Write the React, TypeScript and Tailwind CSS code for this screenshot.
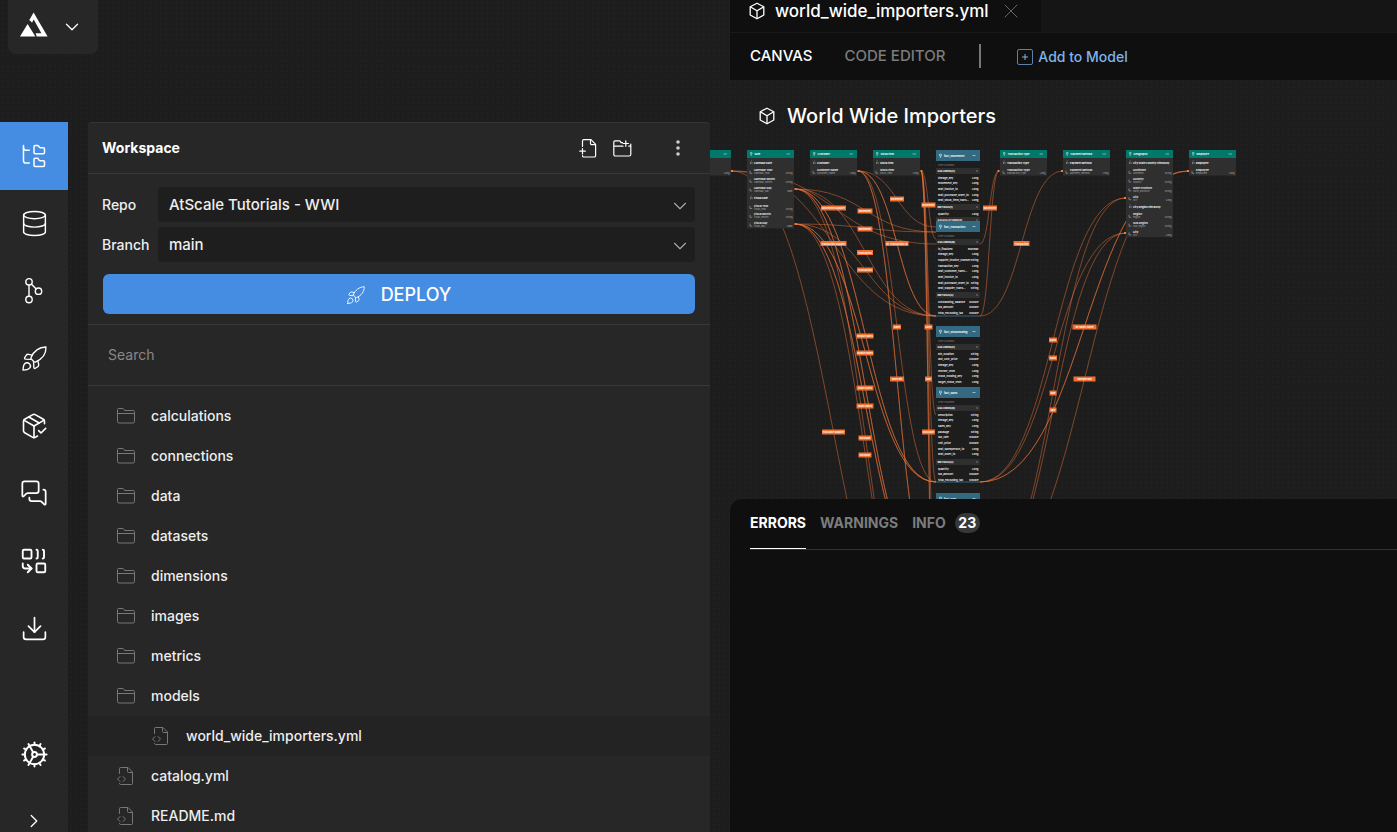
import { useState } from 'react'
import type { ReactNode } from 'react'
import {
  ChevronDown,
  ChevronRight,
  Cog,
  Combine,
  Database,
  Download,
  FolderTree,
  MessagesSquare,
  PackageCheck,
  X,
} from 'lucide-react'

type Row = [name: string, type: string]
type Item = Row | string

/* ---------- icons ---------- */

function Logo() {
  return (
    <svg width="28" height="25" viewBox="0 0 28 25" fill="#fff" aria-hidden="true">
      <path d="M0 24.5 7.6 12 15.4 24.5Z" />
      <path d="M13.6.6 27.6 24.5H16.8L15.6 21.2H21.4L13.7 7.6 12 10.8 10.6 8.9 9.2 8.2Z" />
    </svg>
  )
}

function RocketIcon({ size = 24, stroke = 1.3 }: { size?: number; stroke?: number }) {
  return (
    <svg width={size} height={size} viewBox="0 0 24 24" fill="none" stroke="currentColor" strokeWidth={stroke} strokeLinecap="round" strokeLinejoin="round" aria-hidden="true">
      <path d="M8.6 11.2C11.2 5.2 16.4 1.2 23 1c.2 6.400-3.900 11.800-10.200 14.400a1.200 1.200 0 0 1-1.300-.3L8.900 12.500a1.200 1.200 0 0 1-.3-1.300Z" />
      <path d="M9.800 8.800 6.300 8a2.200 2.200 0 0 0-2.100.7L2.600 11.200c-.4.6 0 1.300.7 1.400l5.200.3" />
      <path d="m15.200 14.200.8 3.500a2.200 2.200 0 0 1-.7 2.100l-2.500 1.600c-.6.4-1.300 0-1.400-.7l-.3-5.200" />
      <path d="M1 23.200c.1-2.600.3-4.900 1.600-6.200a2.900 2.900 0 0 1 4.500 4.500C5.800 22.800 3.500 23.100 1 23.200Z" />
    </svg>
  )
}

function GitIcon() {
  return (
    <svg width="24" height="28" viewBox="0 0 24 28" fill="none" stroke="currentColor" strokeWidth="1.4" aria-hidden="true">
      <circle cx="7" cy="4.800" r="3.200" />
      <circle cx="7" cy="22.500" r="3.200" />
      <circle cx="16.500" cy="14.200" r="3.200" />
      <path d="M7 8v11.300M9.300 7l4.900 4.900" />
    </svg>
  )
}

function CubeIcon() {
  return (
    <svg width="16" height="18" viewBox="0 0 16 18" fill="none" stroke="currentColor" strokeWidth="1.300" strokeLinejoin="round" aria-hidden="true">
      <path d="M8 1.200 14.800 4.800V13L8 16.800 1.200 13V4.800Z" />
      <path d="M1.200 4.800 8 8.800l6.800-4M8 8.800v8" />
    </svg>
  )
}

function FolderIcon() {
  return (
    <svg width="18" height="16" viewBox="0 0 18 16" fill="none" stroke="currentColor" strokeWidth="1" strokeLinejoin="round" aria-hidden="true">
      <path d="M.5 13.500v-12a1 1 0 0 1 1-1h4.300a1 1 0 0 1 .9.500l.8 1.500h9a1 1 0 0 1 1 1v10a1.500 1.500 0 0 1-1.500 1.500H2A1.500 1.500 0 0 1 .5 13.500Z" />
      <path d="M.5 5.500h17" />
    </svg>
  )
}

function FileCodeIcon() {
  return (
    <svg width="18" height="18" viewBox="0 0 18 18" fill="none" stroke="currentColor" strokeWidth="1" strokeLinecap="round" strokeLinejoin="round" aria-hidden="true">
      <path d="M2.500 6.500v-5a1 1 0 0 1 1-1h7.500l4.500 4.500v11.500a1 1 0 0 1-1 1h-11a1 1 0 0 1-1-1" />
      <path d="M10.500.5v4a1 1 0 0 0 1 1h4M3 9.500.5 12 3 14.500M6 9.500 8.500 12 6 14.500" />
    </svg>
  )
}

function NewFileIcon() {
  return (
    <svg width="18" height="19" viewBox="0 0 18 19" fill="none" stroke="currentColor" strokeWidth="1.200" strokeLinecap="round" strokeLinejoin="round" aria-hidden="true">
      <path d="M3.500 7.500V2a1.300 1.300 0 0 1 1.300-1.300H12l4.600 4.600v11.400a1.300 1.300 0 0 1-1.300 1.300H4.800a1.300 1.300 0 0 1-1.300-1.300" />
      <path d="M11.500 1v3.500a1.200 1.200 0 0 0 1.200 1.200h3.700M3.500 9.500v5.500M.8 12.200h5.500" />
    </svg>
  )
}

function NewFolderIcon() {
  return (
    <svg width="19" height="17" viewBox="0 0 19 17" fill="none" stroke="currentColor" strokeWidth="1.200" strokeLinecap="round" strokeLinejoin="round" aria-hidden="true">
      <path d="M10 6.200H.8V2A1.300 1.300 0 0 1 2 .8h4.200a1.300 1.300 0 0 1 1.200.7l.6 1.200h1.500M.8 6.200V14.500A1.500 1.500 0 0 0 2.300 16h14a1.500 1.500 0 0 0 1.500-1.500V6.200h-2M17.800 6.200V4" />
      <path d="M12.800.8v5.500M10 3.500h5.500" />
    </svg>
  )
}

/* ---------- model canvas ---------- */

function curve(x1: number, y1: number, x2: number, y2: number) {
  const mid = (x1 + x2) / 2
  return `M${x1} ${y1}C${mid} ${y1} ${mid} ${y2} ${x2} ${y2}`
}

const edges: [number, number, number, number][] = [
  // supplier
  [731, 171, 936, 244], [731, 171, 936, 316], [731, 171, 936, 693],
  // date
  [795, 189, 936, 232], [795, 224, 936, 232],
  [795, 189, 936, 316], [795, 224, 936, 316],
  [795, 189, 936, 482], [795, 224, 936, 482], [795, 189, 936, 482], [795, 224, 936, 482],
  [795, 189, 936, 587], [795, 224, 936, 587], [795, 189, 936, 587], [795, 224, 936, 587],
  [795, 189, 936, 687], [795, 224, 936, 687],
  // customer
  [858, 171, 936, 227], [858, 171, 936, 316], [858, 171, 936, 316],
  [858, 171, 936, 482], [858, 171, 936, 587], [858, 171, 936, 587],
  // stock item
  [921, 171, 936, 239], [921, 171, 936, 415], [921, 171, 936, 482],
  [921, 171, 936, 587], [921, 171, 936, 693], [921, 171, 936, 693],
  // right hand dimensions
  [980, 244, 999, 171], [980, 316, 999, 171], [980, 316, 1063, 171],
  [980, 482, 1126, 198], [980, 482, 1126, 233], [980, 587, 1126, 198], [980, 587, 1126, 233],
  [980, 482, 1189, 171], [980, 482, 1189, 171], [980, 587, 1189, 171],
]

const handles: [number, number][] = [
  [732, 171], [795.5, 189], [795.5, 224], [858.5, 171], [921.5, 171],
  [998.5, 171], [1062, 171], [1125, 198], [1125, 233], [1188, 171],
]

const edgeLabels: [number, number, number, string][] = [
  [833.5, 208, 25, 'Movement Supplier'],
  [833.5, 243.5, 26, 'Transaction Supplier'],
  [833.5, 432, 23, 'Purchase Supplier'],
  [865, 211, 15, 'Movement'],
  [865, 229, 15, 'Movement'],
  [865, 252.5, 16, 'Transaction'],
  [865, 270, 16, 'Transaction'],
  [865, 336, 17, 'Invoice Dates'],
  [865, 353, 17, 'Invoice Dates'],
  [865, 388, 17, 'Order Dates'],
  [865, 406, 17, 'Order Dates'],
  [865, 438, 13, 'Purchase'],
  [865, 455, 13, 'Purchase'],
  [897, 199, 14, 'Movement'],
  [897, 243.5, 23, 'W: Transaction: W'],
  [897, 327, 8, 'Sales'],
  [897, 379, 14, 'Sales Bill'],
  [928.5, 205, 14, 'Movement'],
  [928.5, 327, 8, 'Sales'],
  [928.5, 379, 7, 'Sale'],
  [928.5, 432, 13, 'Purchase'],
  [990, 208, 14, 'Movement'],
  [1021.5, 243.5, 16, 'Transaction'],
  [1053, 340, 8, 'Sales'],
  [1053, 358, 8, 'Sales'],
  [1053, 393, 7, 'Sale'],
  [1053, 410, 7, 'Sale'],
  [1084.5, 327, 24, 'W: Sales: Sales'],
  [1084.5, 379, 22, 'Salesperson'],
]

// a plain string is a hierarchy, a pair is one of its levels
const dimensions: { x: number; title: string; items: Item[] }[] = [
  { x: 684, title: 'Supplier', items: ['Supplier', ['Supplier', 'Long']] },
  {
    x: 747,
    title: 'Date',
    items: [
      'Calendar Date', ['Calendar Year', 'String'], ['Calendar Month', 'String'], ['Calendar Day', 'Date'],
      'Fiscal Date', ['Fiscal Year', 'String'], ['Fiscal Month', 'String'], ['Fiscal Day', 'Date'],
    ],
  },
  { x: 810, title: 'Customer', items: ['Customer', ['Customer Name', 'Long']] },
  { x: 873, title: 'Stock Item', items: ['Stock Item', ['Stock Item', 'Long']] },
  { x: 1000, title: 'Transaction Type', items: ['Transaction Type', ['Transaction Type', 'Long']] },
  { x: 1063, title: 'Payment Method', items: ['Payment Method', ['Payment Method', 'Long']] },
  {
    x: 1126,
    title: 'Geography',
    items: [
      'City State Country Hierarchy', ['Continent', 'String'], ['Country', 'String'], ['State Province', 'String'], ['City', 'Long'],
      'City Region Hierarchy', ['Region', 'String'], ['Sub Region', 'String'], ['City', 'Long'],
    ],
  },
  { x: 1189, title: 'Employee', items: ['Employee', ['Employee', 'Long']] },
]

const facts: { y: number; height: number; title: string; groups: [string, number, Row[]][] }[] = [
  {
    y: 150,
    height: 75,
    title: 'fact_movement',
    groups: [
      ['COLUMNS(5)', 18, [['lineage_key', 'Long'], ['movement_key', 'Long'], ['wwi_invoice_id', 'Long'], ['wwi_purchase_order_id', 'Long'], ['wwi_stock_item_trans...', 'Long']]],
      ['METRICS(1)', 54, [['quantity', 'Long']]],
      ['CALCULATIONS(0)', 67, []],
    ],
  },
  {
    y: 221,
    height: 95,
    title: 'fact_transaction',
    groups: [
      ['COLUMNS(8)', 18, [['is_finalized', 'Boolean'], ['lineage_key', 'Long'], ['supplier_invoice_number', 'String'], ['transaction_key', 'Long'], ['wwi_customer_trans...', 'Long'], ['wwi_invoice_id', 'Long'], ['wwi_purchase_order_id', 'String'], ['wwi_supplier_trans...', 'String']]],
      ['METRICS(3)', 71, [['outstanding_balance', 'Double'], ['tax_amount', 'Double'], ['total_excluding_tax', 'Double']]],
    ],
  },
  {
    y: 326,
    height: 62,
    title: 'fact_stockholding',
    groups: [
      ['COLUMNS(6)', 18, [['bin_location', 'String'], ['last_cost_price', 'Double'], ['lineage_key', 'Long'], ['reorder_level', 'Long'], ['stock_holding_key', 'Long'], ['target_stock_level', 'Long']]],
    ],
  },
  {
    y: 387,
    height: 95,
    title: 'fact_sales',
    groups: [
      ['COLUMNS(8)', 18, [['description', 'String'], ['lineage_key', 'Long'], ['sales_key', 'Long'], ['package', 'String'], ['tax_rate', 'Double'], ['unit_price', 'Double'], ['wwi_salesperson_id', 'Long'], ['wwi_order_id', 'Long']]],
      ['METRICS(3)', 72, [['quantity', 'Long'], ['tax_amount', 'Double'], ['total_excluding_tax', 'Double']]],
    ],
  },
  { y: 493, height: 95, title: 'fact_sale', groups: [] },
]

const ROW = 8.8

function DimensionNode({ x, title, items }: { x: number; title: string; items: Item[] }) {
  return (
    <g transform={`translate(${x} 150)`}>
      <rect width="47" height={8 + items.length * ROW} fill="#2f2f2f" />
      <rect width="47" height="8" fill="#00796b" />
      <path d="M3.500 2.500h1.500v1.500h-1.500zM4.200 4v2M39.500 4h3.500" stroke="#8fc9c2" strokeWidth=".8" fill="none" />
      <text x="7.500" y="5" fontSize="2.600" fontWeight="700" fill="#fff">{title}</text>
      {items.map((item, i) => {
        const y = 8 + i * ROW
        if (typeof item === 'string') {
          return (
            <g key={i}>
              <path d={`M3.500 ${y + 6}v-2M5 ${y + 6}v-2M4.200 ${y + 3.5}v-1`} stroke="#999" strokeWidth=".7" />
              <text x="7" y={y + 6} fontSize="2.600" fontWeight="700" fill="#fff">{item}</text>
            </g>
          )
        }
        return (
          <g key={i}>
            <path d={`M3 ${y + 4}v2.500h2.200`} stroke="#999" strokeWidth=".7" fill="none" />
            <text x="7" y={y + 4.5} fontSize="2.700" fontWeight="700" fill="#eee">{item[0]}</text>
            <text x="7" y={y + 7.5} fontSize="2.400" fill="#aaa">{item[0].toLowerCase().replace(' ', '_')}</text>
            <text x="45.500" y={y + 7.5} fontSize="2.400" fill="#aaa" textAnchor="end">{item[1]}</text>
          </g>
        )
      })}
    </g>
  )
}

function FactNode({ y, height, title, groups }: (typeof facts)[number]) {
  return (
    <g transform={`translate(936 ${y})`}>
      <rect width="44" height={height} fill="#1d1d1d" />
      <rect width="44" height="11" fill="#346a81" />
      <path d={`M0 ${height}h44`} stroke="#346a81" strokeWidth="1" />
      <path d="M3.500 4.200h2v1.800h-2zM4.500 6v2M36.500 5.500h3" stroke="#a5c4d0" strokeWidth=".9" fill="none" />
      <text x="8" y="6.500" fontSize="2.700" fontWeight="700" fill="#fff">{title}</text>
      <text x="2" y="15.500" fontSize="2.400" fill="#888">Filter Columns</text>
      {groups.map(([name, top, rows]) => (
        <g key={name}>
          <rect y={top} width="44" height="6" fill="#2f2f2f" />
          <text x="1.500" y={top + 4} fontSize="2.700" fontWeight="700" fill="#fff">{name}</text>
          <path d={`M40 ${top + 3}h2`} stroke="#999" strokeWidth=".7" />
          {rows.map(([col, type], i) => (
            <g key={col} fill="#fff" fontSize="2.700" fontWeight="600">
              <text x="2" y={top + 10.5 + i * 5.7}>{col}</text>
              <text x="42.500" y={top + 10.5 + i * 5.7} textAnchor="end">{type}</text>
            </g>
          ))}
        </g>
      ))}
    </g>
  )
}

function ModelCanvas() {
  return (
    <svg className="absolute inset-0 h-full w-full" fontFamily="Inter, sans-serif" role="img" aria-label="Model canvas">
      <defs>
        <pattern id="dots" width="5.270" height="5.270" patternUnits="userSpaceOnUse">
          <circle cx="2.600" cy="2.600" r=".5" fill="#303030" />
        </pattern>
      </defs>
      <rect width="100%" height="100%" fill="url(#dots)" />
      <g fill="none" stroke="#f0743a" strokeOpacity=".47" strokeWidth="1">
        {edges.map((e, i) => (
          <path key={i} d={curve(...e)} />
        ))}
      </g>
      {dimensions.map((d) => (
        <DimensionNode key={d.x} {...d} />
      ))}
      {facts.map((f) => (
        <FactNode key={f.y} {...f} />
      ))}
      {handles.map(([x, y]) => (
        <rect key={`${x}-${y}`} x={x - 1} y={y - 1} width="2" height="2" fill="#ff7a2f" />
      ))}
      {edgeLabels.map(([x, y, w, text]) => (
        <g key={`${x}-${y}`}>
          <rect x={x - w / 2} y={y - 2.5} width={w} height="5" fill="#f2702f" />
          <text x={x} y={y + 1} fontSize="2.400" fontWeight="700" fill="#fff" textAnchor="middle">{text}</text>
        </g>
      ))}
    </svg>
  )
}

/* ---------- side bar ---------- */

const navItems: { label: string; icon: ReactNode }[] = [
  { label: 'Repository', icon: <FolderTree size={28} strokeWidth={1.3} /> },
  { label: 'Data sources', icon: <Database size={29} strokeWidth={1.2} /> },
  { label: 'Version control', icon: <GitIcon /> },
  { label: 'Deployments', icon: <RocketIcon size={25} /> },
  { label: 'Packages', icon: <PackageCheck size={28} strokeWidth={1.4} /> },
  { label: 'Discussions', icon: <MessagesSquare size={28} strokeWidth={1.5} /> },
  { label: 'Aggregates', icon: <Combine size={30} strokeWidth={1.5} /> },
  { label: 'Downloads', icon: <Download size={29} strokeWidth={1.4} /> },
]

function SideNav() {
  const [active, setActive] = useState('Repository')

  return (
    <nav className="flex w-[68px] shrink-0 flex-col bg-[#272727] text-white">
      <ul className="flex h-[540px] shrink-0 flex-col">
        {navItems.map(({ label, icon }) => (
          <li key={label} className="flex flex-1">
            <button
              type="button"
              aria-label={label}
              onClick={() => setActive(label)}
              className={active === label ? 'flex w-full items-center justify-center bg-[#448de2]' : 'flex w-full items-center justify-center'}
            >
              {icon}
            </button>
          </li>
        ))}
      </ul>
      <button type="button" aria-label="Settings" className="mt-auto flex h-[67px] shrink-0 items-center justify-center">
        <Cog size={29} strokeWidth={1.6} />
      </button>
      <button type="button" aria-label="Expand" className="flex h-11 shrink-0 items-end justify-center">
        <ChevronRight size={22} strokeWidth={1.4} />
      </button>
    </nav>
  )
}

/* ---------- workspace ---------- */

const files: { name: string; kind: 'folder' | 'file'; nested?: boolean }[] = [
  { name: 'calculations', kind: 'folder' },
  { name: 'connections', kind: 'folder' },
  { name: 'data', kind: 'folder' },
  { name: 'datasets', kind: 'folder' },
  { name: 'dimensions', kind: 'folder' },
  { name: 'images', kind: 'folder' },
  { name: 'metrics', kind: 'folder' },
  { name: 'models', kind: 'folder' },
  { name: 'world_wide_importers.yml', kind: 'file', nested: true },
  { name: 'catalog.yml', kind: 'file' },
  { name: 'README.md', kind: 'file' },
]

function SelectRow({ id, label, value }: { id: string; label: string; value: string }) {
  return (
    <div className="flex items-center">
      <label htmlFor={id} className="w-[56px] shrink-0 text-sm font-medium">{label}</label>
      <div className="relative flex-1">
        <select id={id} className="h-[35px] w-full appearance-none rounded bg-[#1e1e1e] px-[11px] pt-px text-[15px] font-medium text-[#eee] outline-none">
          <option>{value}</option>
        </select>
        <ChevronDown size={22} strokeWidth={1.2} className="pointer-events-none absolute top-2 right-1 text-[#aaa]" />
      </div>
    </div>
  )
}

function Workspace() {
  return (
    <aside className="flex min-w-0 flex-1 flex-col rounded-t border-t border-[#353535] bg-[#272727] text-[#eee]">
      <header className="flex h-[51px] shrink-0 items-center border-b border-[#383838] px-[14px] text-white">
        <h2 className="flex-1 text-sm font-bold">Workspace</h2>
        <button type="button" aria-label="New file"><NewFileIcon /></button>
        <button type="button" aria-label="New folder" className="ml-4"><NewFolderIcon /></button>
        <button type="button" aria-label="More" className="ml-7 flex w-9 justify-center text-[#ccc]">
          <svg width="4" height="18" viewBox="0 0 4 18" fill="currentColor" aria-hidden="true">
            <circle cx="2" cy="3" r="1.800" />
            <circle cx="2" cy="9" r="1.800" />
            <circle cx="2" cy="15" r="1.800" />
          </svg>
        </button>
      </header>

      <div className="flex shrink-0 flex-col gap-[5px] border-b border-[#383838] pt-[13px] pr-[15px] pb-[10px] pl-[14px]">
        <SelectRow id="repo" label="Repo" value="AtScale Tutorials - WWI" />
        <SelectRow id="branch" label="Branch" value="main" />
        <button type="button" className="mt-[7px] ml-px flex h-10 items-center justify-center gap-4 rounded-md bg-[#448de2] pt-px text-lg font-medium text-white">
          <RocketIcon size={18} stroke={1.2} />
          DEPLOY
        </button>
      </div>

      <div className="flex h-[61px] shrink-0 items-center border-b border-[#383838] px-5">
        <input aria-label="Search" placeholder="Search" className="w-full bg-transparent text-sm outline-none placeholder:text-[#888]" />
      </div>

      <ul className="min-h-0 flex-1 overflow-hidden pt-[10px]">
        {files.map(({ name, kind, nested }) => (
          <li key={name} className={nested ? 'bg-[#232323] pl-16' : 'pl-[29px]'}>
            <a href={`#${name}`} className="flex h-10 items-center gap-4 text-sm font-medium">
              <span className="w-[18px] shrink-0 text-[#777]">{kind === 'folder' ? <FolderIcon /> : <FileCodeIcon />}</span>
              {name}
            </a>
          </li>
        ))}
      </ul>
    </aside>
  )
}

/* ---------- editor ---------- */

function EditorHeader() {
  return (
    <header className="shrink-0">
      <div className="flex h-8 bg-[#151515]">
        <div className="flex w-[311px] items-center bg-[#0f0f0f] pb-[10px] pl-[19px]">
          <CubeIcon />
          <span className="ml-[10px] text-[17px] leading-[22px] font-medium">world_wide_importers.yml</span>
          <button type="button" aria-label="Close tab" className="ml-[10px] text-[#666]"><X size={24} strokeWidth={1} /></button>
        </div>
      </div>
      <div className="flex h-12 items-center border-t border-[#1a1a1a] bg-[#0f0f0f] pl-5">
        <button type="button" className="text-[15px] font-medium">CANVAS</button>
        <button type="button" className="ml-8 text-[15px] font-medium text-[#7c7c7c]">CODE EDITOR</button>
        <span className="mb-px ml-[34px] h-6 w-[2px] bg-[#777]" />
        <a href="#add" className="ml-9 flex items-center gap-[5px] text-sm font-medium text-[#7fb4ea]">
          <svg width="16" height="16" viewBox="0 0 16 16" fill="none" stroke="currentColor" aria-hidden="true">
            <rect x=".5" y=".5" width="15" height="15" rx="1.500" strokeOpacity=".7" />
            <path d="M8 5v6M5 8h6" />
          </svg>
          Add to Model
        </a>
      </div>
    </header>
  )
}

function ProblemsPanel() {
  return (
    <section className="h-[333px] shrink-0 rounded-tl-xl bg-[#0f0f0f] pl-5">
      <div className="flex h-[51px] items-stretch border-b border-[#333] text-sm font-bold text-[#7c7c7c]">
        <button type="button" className="border-b border-white pb-px text-white">ERRORS</button>
        <button type="button" className="ml-[14px] pb-[2px]">WARNINGS</button>
        <button type="button" className="ml-[14px] flex items-center gap-[9px] pb-[2px]">
          INFO
          <span className="flex h-5 w-[25px] items-center justify-center rounded-full bg-[#383838] text-white">23</span>
        </button>
      </div>
    </section>
  )
}

export default function App() {
  return (
    <div className="relative flex h-screen overflow-hidden bg-[#1d1d1d] font-['Inter',sans-serif] text-white">
      <ModelCanvas />

      <div className="relative flex w-[710px] shrink-0 flex-col">
        <div className="h-[122px] shrink-0 pl-2">
          <button type="button" aria-label="Switch product" className="flex h-[54px] w-[90px] items-start gap-[13px] rounded-b-lg bg-[#272727] pt-3 pl-3">
            <Logo />
            <ChevronDown size={22} strokeWidth={1.4} className="mt-1" />
          </button>
        </div>
        <div className="flex min-h-0 flex-1 gap-5">
          <SideNav />
          <Workspace />
        </div>
      </div>

      <main className="relative ml-5 flex min-w-0 flex-1 flex-col">
        <EditorHeader />
        <h1 className="flex flex-1 items-start gap-3 pt-[22px] pl-[29px] text-xl font-medium">
          <span className="flex h-7 items-center"><CubeIcon /></span>
          World Wide Importers
        </h1>
        <ProblemsPanel />
      </main>
    </div>
  )
}
